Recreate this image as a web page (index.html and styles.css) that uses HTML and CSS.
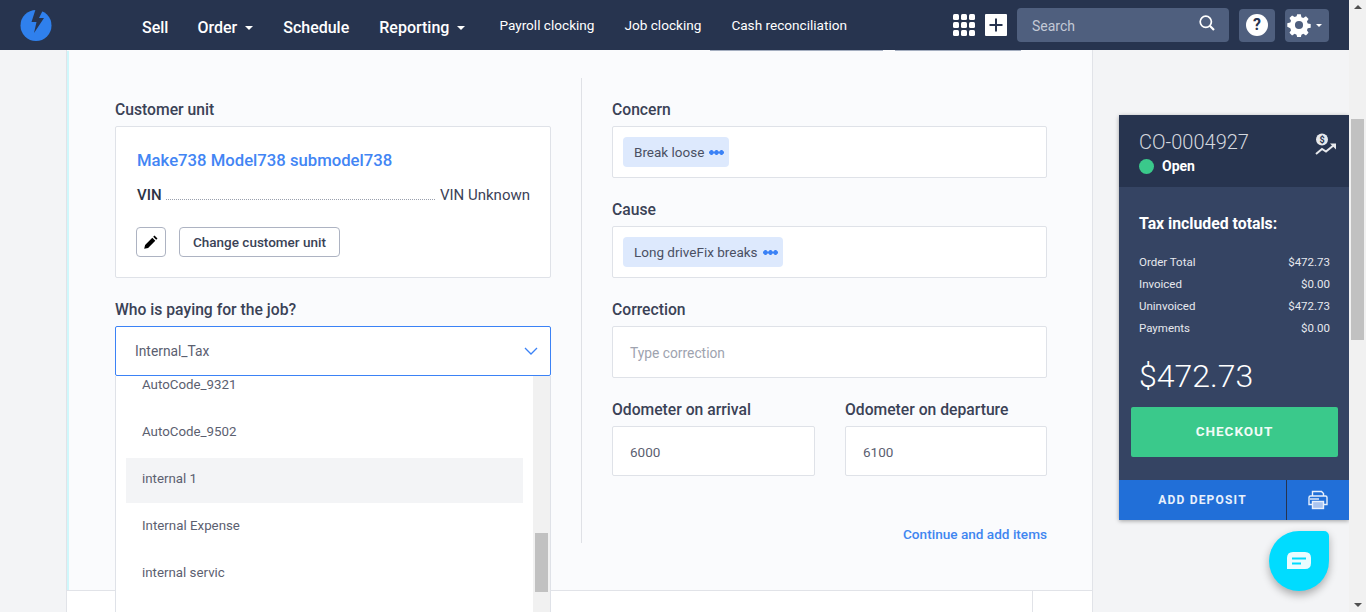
FILE: index.html
```html
<!doctype html>
<html>
<head>
  <meta charset="utf-8">
  <title>Job</title>
  <link rel="stylesheet" href="styles.css">
</head>
<body>
  <div class="page">
    <header class="topbar">
      <svg class="logo" viewBox="0 0 32 32" width="32" height="32">
        <circle cx="16" cy="16.5" r="15.5" fill="#2f80ed"/>
        <path d="M16 -1 L24 -1 L19 9 L24 9 L14 24 L16.500 13 L11.500 13 Z" fill="#27344f"/>
      </svg>
      <nav class="mainnav">
        <a class="big sell">Sell</a>
        <a class="big caret">Order</a>
        <a class="big">Schedule</a>
        <a class="big caret">Reporting</a>
        <a class="first-small">Payroll clocking</a>
        <a>Job clocking</a>
        <a>Cash reconciliation</a>
      </nav>
      <div class="tools">
        <svg viewBox="0 0 22 22" width="22" height="22" fill="#fff">
          <rect x="0" y="0" width="6" height="6" rx="1.500"/><rect x="8" y="0" width="6" height="6" rx="1.500"/><rect x="16" y="0" width="6" height="6" rx="1.500"/>
          <rect x="0" y="8" width="6" height="6" rx="1.500"/><rect x="8" y="8" width="6" height="6" rx="1.500"/><rect x="16" y="8" width="6" height="6" rx="1.500"/>
          <rect x="0" y="16" width="6" height="6" rx="1.500"/><rect x="8" y="16" width="6" height="6" rx="1.500"/><rect x="16" y="16" width="6" height="6" rx="1.500"/>
        </svg>
        <svg class="plus" viewBox="0 0 22 22" width="22" height="22">
          <rect width="22" height="22" rx="1" fill="#fff"/>
          <path d="M11 4.500V17.500M4.500 11H17.500" stroke="#27344f" stroke-width="2"/>
        </svg>
        <div class="search">
          <span>Search</span>
          <svg viewBox="0 0 16 16" width="16" height="16" fill="none" stroke="#fff" stroke-width="1.700">
            <circle cx="6.800" cy="6.800" r="5.600"/><path d="M10.800 10.800L15 15" stroke-width="2.200"/>
          </svg>
        </div>
        <div class="iconbtn help"><span>?</span></div>
        <div class="iconbtn gear">
          <svg viewBox="0 0 24 24" width="24" height="24">
            <path fill="#fff" fill-rule="evenodd" d="M10 0h4l.7 3.300 2.100.9 2.900-1.800 2.900 2.900-1.800 2.900.9 2.100 3.300.7v4l-3.300.7-.9 2.100 1.800 2.900-2.900 2.900-2.900-1.800-2.100.9-.7 3.300h-4l-.7-3.300-2.100-.9-2.900 1.800-2.900-2.900 1.800-2.900-.9-2.100L-1 14v-4l3.300-.7.9-2.100-1.800-2.900 2.900-2.900 2.900 1.800 2.100-.9zM12 7.500a4.500 4.500 0 1 0 0 9 4.500 4.500 0 0 0 0-9z" transform="translate(1.200 1.200) scale(.9)"/>
          </svg>
          <i class="tri"></i>
        </div>
      </div>
    </header>

    <div class="content">
      <main class="panel">
        <div class="slivers"><i class="s1"></i><i class="s2"></i></div>
        <div class="form">
          <section class="col-left">
            <label>Customer unit</label>
            <div class="unit">
              <a class="unit-name">Make738 Model738 submodel738</a>
              <div class="vin"><b>VIN</b><i class="dots"></i><span>VIN Unknown</span></div>
              <div class="unit-actions">
                <button class="btn square">
                  <svg viewBox="0 0 16 16" width="16" height="16"><path d="M11.500 1.500l3 3-1.300 1.300-3-3zM9.300 3.700l3 3-7.200 7.200-3.900.9.900-3.900z" fill="#000"/></svg>
                </button>
                <button class="btn">Change customer unit</button>
              </div>
            </div>
            <label class="payer-label">Who is paying for the job?</label>
            <div class="select">
              <span>Internal_Tax</span>
              <svg viewBox="0 0 14 8" width="14" height="8" fill="none" stroke="#3b82f6" stroke-width="1.300"><path d="M1 1l6 6 6-6"/></svg>
            </div>
          </section>
          <section class="col-right">
            <label>Concern</label>
            <div class="tagbox"><span class="tag">Break loose<i class="more"></i></span></div>
            <label>Cause</label>
            <div class="tagbox"><span class="tag">Long driveFix breaks<i class="more"></i></span></div>
            <label>Correction</label>
            <div class="tagbox placeholder">Type correction</div>
            <div class="odometers">
              <div>
                <label>Odometer on arrival</label>
                <div class="numbox">6000</div>
              </div>
              <div>
                <label>Odometer on departure</label>
                <div class="numbox">6100</div>
              </div>
            </div>
            <a class="continue">Continue and add items</a>
          </section>
        </div>
        <div class="panel-foot"><i></i></div>

        <div class="menu">
          <ul>
            <li class="clip">AutoCode_9321</li>
            <li>AutoCode_9502</li>
            <li class="hover">internal 1</li>
            <li>Internal Expense</li>
            <li>internal servic</li>
          </ul>
          <div class="menu-track"><i></i></div>
        </div>
      </main>

      <aside class="summary">
        <div class="summary-head">
          <div>
            <div class="order-no">CO-0004927</div>
            <div class="status"><i></i>Open</div>
          </div>
          <svg viewBox="0 0 22 22" width="22" height="22">
            <circle cx="7" cy="6.500" r="6" fill="#e6e8ec"/>
            <text x="7" y="9.800" font-size="9" font-weight="700" text-anchor="middle" fill="#27344f" font-family="Roboto, sans-serif">$</text>
            <path d="M1 21l6-5 4 2.500L19 12" fill="none" stroke="#e6e8ec" stroke-width="2"/>
            <path d="M15 10.500h6v6z" fill="#e6e8ec"/>
          </svg>
        </div>
        <div class="summary-body">
          <h3>Tax included totals:</h3>
          <dl>
            <div><dt>Order Total</dt><dd>$472.73</dd></div>
            <div><dt>Invoiced</dt><dd>$0.00</dd></div>
            <div><dt>Uninvoiced</dt><dd>$472.73</dd></div>
            <div><dt>Payments</dt><dd>$0.00</dd></div>
          </dl>
          <div class="grand">$472.73</div>
          <button class="checkout">CHECKOUT</button>
        </div>
        <div class="summary-foot">
          <button class="deposit">ADD DEPOSIT</button>
          <button class="print">
            <svg viewBox="0 0 20 20" width="20" height="20" fill="none" stroke="#e8f0fc" stroke-width="1.400">
              <path d="M4.500 6V1.500H13.500L15.500 3.500V6"/>
              <path d="M4 14.500H1V7.500Q1 6 2.500 6H17.500Q19 6 19 7.500V14.500H16"/>
              <rect x="4.500" y="11.500" width="11" height="7" fill="#a9c4f0"/>
              <path d="M2 9h9"/>
            </svg>
          </button>
        </div>
      </aside>
    </div>
  </div>

  <div class="scrollbar">
    <i class="arrow up"></i>
    <div class="thumb-track"><i class="thumb"></i></div>
    <i class="arrow down"></i>
  </div>

  <div class="chat">
    <svg viewBox="0 0 24 18" width="24" height="18">
      <path d="M6 0H18Q24 0 24 6V11Q24 17 18 17H0V6Q0 0 6 0Z" fill="#eafcff"/>
      <path d="M5 6.500H19" stroke="#00dcff" stroke-width="2"/>
      <path d="M5 11.500H14" stroke="#00dcff" stroke-width="2"/>
    </svg>
  </div>
</body>
</html>
```

FILE: styles.css
```css
* { box-sizing: border-box; }
html, body { height: 100%; }
body {
  margin: 0;
  display: flex;
  height: 612px;
  overflow: hidden;
  background: #f3f4f6;
  font-family: Roboto, "Liberation Sans", sans-serif;
  font-size: 14px;
  color: #3c4257;
}
i { display: block; }
button { font-family: inherit; cursor: pointer; }
label { display: block; font-weight: 500; font-size: 15.700px; line-height: 20px; color: #3a4256; }

.page { width: 1349px; display: flex; flex-direction: column; }

/* top bar */
.topbar {
  height: 50px;
  flex: none;
  background: #27344f;
  display: flex;
  align-items: center;
  padding-left: 20px;
  color: #fff;
}
.logo { flex: none; }
.mainnav { display: flex; align-items: center; margin-left: 90px; gap: 30px; font-size: 13.600px; }
.mainnav a { color: #fff; white-space: nowrap; }
.mainnav a.big { font-size: 16px; font-weight: 500; padding-top: 4px; }
.mainnav a.sell { margin-right: -1px; }
.mainnav a.first-small { margin-left: 4px; }
.caret::after {
  content: '';
  display: inline-block;
  margin-left: 8px;
  vertical-align: 3px;
  border: 4px solid transparent;
  border-top-color: #fff;
  border-bottom: 0;
}
.tools { margin-left: auto; margin-right: 20px; display: flex; align-items: center; }
.tools > svg { margin-right: 10px; }
.search {
  width: 212px;
  height: 34px;
  background: #4f5f7e;
  border-radius: 4px;
  padding: 2px 14px 0 15px;
  display: flex;
  align-items: center;
  justify-content: space-between;
  color: #c3c9d6;
  margin-right: 10px;
}
.search svg { margin-top: -6px; }
.iconbtn {
  height: 33px;
  background: #4f5f7e;
  border-radius: 4px;
  display: flex;
  align-items: center;
  justify-content: center;
}
.help { width: 36px; margin-right: 10px; }
.help span {
  width: 22px;
  height: 22px;
  border-radius: 50%;
  background: #fff;
  color: #27344f;
  font-weight: 700;
  font-size: 16px;
  line-height: 22px;
  text-align: center;
}
.gear { width: 44px; gap: 5px; justify-content: flex-start; padding-left: 2px; }
.tri { border: 3.500px solid transparent; border-top-color: #fff; border-bottom: 0; }

/* main */
.content { flex: 1; display: flex; padding-left: 66px; min-height: 0; }
.panel {
  position: relative;
  width: 1027px;
  background: #fafbfd;
  border-right: 1px solid #e1e3e8;
  border-left: 1px solid #e1e3e8;
  display: flex;
  flex-direction: column;
}
.slivers { display: flex; height: 1px; padding-left: 643px; gap: 12px; flex: none; }
.slivers i { height: 1px; background: #a4aec0; }
.s1 { width: 173px; }
.s2 { width: 126px; }

.form {
  flex: 1;
  display: flex;
  border-left: 2px solid #cff7fb;
  padding: 49px 45px 0 46px;
}
.col-left { width: 436px; }
.col-right { width: 435px; margin-left: 61px; position: relative; }
.col-right::before {
  content: '';
  position: absolute;
  left: -31px;
  top: -22px;
  height: 465px;
  width: 1px;
  background: #dfe1e6;
}
.col-right > label, .col-left > label { margin-bottom: 6px; }

.unit {
  height: 152px;
  background: #fff;
  border: 1px solid #dfe2e8;
  border-radius: 2px;
  padding: 23px 20px 0 21px;
}
.unit-name { display: block; color: #4285f4; font-size: 16.700px; font-weight: 500; line-height: 22px; }
.vin { display: flex; align-items: baseline; margin-top: 13px; line-height: 20px; font-size: 15px; }
.vin b { font-weight: 500; color: #2c3345; }
.dots { flex: 1; border-bottom: 1px dotted #9aa0ad; margin: 0 5px 0 4px; }
.unit-actions { display: flex; margin: 22px 0 0 -1px; gap: 13px; }
.btn {
  height: 30px;
  border: 1px solid #adb3c2;
  border-radius: 4px;
  background: #fff;
  padding: 0 13px;
  font-size: 13.500px;
  font-weight: 500;
  color: #3a4256;
  line-height: 28px;
}
.btn.square { width: 30px; padding: 6px 6px; display: flex; }
.payer-label { margin-top: 22px; }
.select {
  height: 50px;
  background: #fff;
  border: 1px solid #3b82f6;
  border-radius: 2px;
  padding: 0 12px 0 19px;
  display: flex;
  align-items: center;
  justify-content: space-between;
  color: #5b6070;
  font-size: 13.800px;
}

.tagbox {
  height: 52px;
  background: #fff;
  border: 1px solid #dfe2e8;
  border-radius: 2px;
  padding: 10px;
  margin-bottom: 22px;
}
.tag {
  display: inline-flex;
  align-items: center;
  height: 30px;
  padding: 0 5px 0 11px;
  background: #dde9fd;
  border-radius: 4px;
  font-size: 13.500px;
  color: #4a5063;
}
.more {
  width: 15px;
  height: 5px;
  margin-left: 5px;
  background: radial-gradient(circle at 2.500px 2.500px, #3b82f6 2.100px, transparent 2.500px) 0 0 / 5px 5px repeat-x;
}
.placeholder { padding: 0 17px; line-height: 52px; color: #9ea3af; font-size: 13.800px; }
.odometers { display: flex; gap: 30px; }
.odometers > div { flex: 1 1 0; }
.odometers > div:first-child { flex: none; width: 203px; }
.odometers label { margin-bottom: 6px; }
.numbox {
  height: 50px;
  background: #fff;
  border: 1px solid #dfe2e8;
  border-radius: 2px;
  padding: 0 17px;
  line-height: 50px;
  font-size: 13.500px;
  color: #5b6070;
}
.continue {
  display: block;
  text-align: right;
  margin-top: 49px;
  color: #3f86f0;
  font-weight: 500;
  font-size: 13.600px;
  line-height: 18px;
}

.panel-foot {
  height: 22px;
  flex: none;
  background: #fff;
  border-top: 1px solid #e1e3e8;
  padding-left: 965px;
}
.panel-foot i { width: 1px; height: 21px; background: #e1e3e8; }

/* dropdown list over the form */
.menu {
  position: absolute;
  left: 48px;
  top: 326px;
  width: 436px;
  height: 236px;
  background: #fff;
  border-left: 1px solid #dfe2e8;
  border-right: 1px solid #dfe2e8;
  display: flex;
  overflow: hidden;
}
.menu ul {
  flex: 1;
  list-style: none;
  margin: 0;
  padding: 0 10px;
  font-size: 13.300px;
  color: #5b6070;
}
.menu li { height: 47px; line-height: 45px; padding-left: 16px; }
.menu li.clip { height: 34px; margin-top: -1px; line-height: 20px; }
.menu li.hover { background: #f3f4f6; height: 45px; margin: 2px 0 0; line-height: 41px; }
.menu-track { width: 17px; background: #f1f1f1; padding: 157px 2px 0; }
.menu-track i { width: 13px; height: 59px; background: #c1c1c1; }

/* order summary */
.summary {
  width: 230px;
  height: 405px;
  margin: 65px 0 0 26px;
  background: #354463;
  border-radius: 2px 2px 0 0;
  box-shadow: 0 1px 4px rgba(0, 0, 0, .35);
  display: flex;
  flex-direction: column;
  flex: none;
  color: #fff;
}
.summary-head {
  height: 72px;
  background: #27344f;
  padding: 15px 12px 0 20px;
  display: flex;
  justify-content: space-between;
  flex: none;
}
.summary-head svg { margin-top: 3px; }
.order-no { font-size: 20px; font-weight: 300; line-height: 24px; color: #d5d8df; }
.status { display: flex; align-items: center; font-weight: 700; font-size: 14px; margin-top: 3px; line-height: 18px; }
.status i { width: 15px; height: 15px; border-radius: 50%; background: #3ac98b; margin-right: 8px; }
.summary-body { flex: 1; padding: 27px 11px 0 12px; }
.summary-body h3 { margin: 0 0 0 8px; font-size: 15.800px; line-height: 20px; font-weight: 700; }
.summary-body dl { margin: 17px 8px 0; font-size: 11.500px; color: #e6e8ee; }
.summary-body dl div { display: flex; justify-content: space-between; height: 22px; line-height: 22px; }
.summary-body dt, .summary-body dd { margin: 0; }
.grand { margin: 16px 0 0 8px; font-size: 32px; font-weight: 300; line-height: 42px; }
.checkout {
  display: block;
  width: 207px;
  height: 50px;
  margin-top: 10px;
  padding: 0 0 2px;
  border: 0;
  border-radius: 2px;
  background: #3ac98b;
  color: #f2fbf7;
  font-size: 13.500px;
  font-weight: 700;
  letter-spacing: 1px;
}
.summary-foot { height: 40px; display: flex; flex: none; background: #216fd8; }
.deposit {
  width: 168px;
  border: 0;
  border-right: 1px solid #27344f;
  background: none;
  color: #e8f0fc;
  font-size: 12px;
  font-weight: 700;
  letter-spacing: 1.200px;
}
.print { flex: 1; border: 0; background: none; display: flex; align-items: center; justify-content: center; padding: 0; }

/* fake window scrollbar */
.scrollbar { width: 17px; flex: none; background: #f1f1f1; display: flex; flex-direction: column; }
.arrow { height: 17px; flex: none; position: relative; }
.arrow::after {
  content: '';
  position: absolute;
  left: 5px;
  border: 4px solid transparent;
}
.up::after { top: 5px; border-bottom-color: #505050; border-top: 0; }
.down::after { top: 8px; border-top-color: #505050; border-bottom: 0; }
.thumb-track { flex: 1; padding: 102px 2px 0; }
.thumb { height: 221px; background: #c1c1c1; }

.chat {
  position: fixed;
  left: 1269px;
  top: 531px;
  width: 60px;
  height: 60px;
  background: #00dcff;
  border-radius: 50% 5px 50% 50%;
  box-shadow: 0 4px 8px rgba(0, 0, 0, .3);
  display: flex;
  align-items: center;
  justify-content: center;
}
```
